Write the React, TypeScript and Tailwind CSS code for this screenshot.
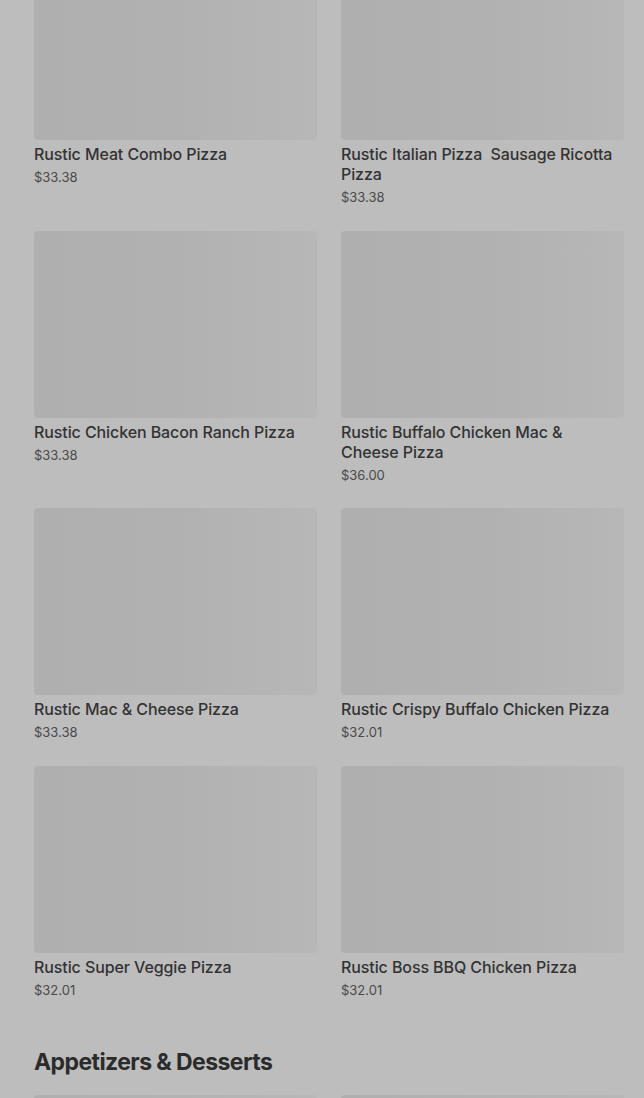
const items = [
  { name: "Rustic Meat Combo Pizza", price: "$33.38" },
  { name: "Rustic Italian Pizza  Sausage Ricotta Pizza", price: "$33.38" },
  { name: "Rustic Chicken Bacon Ranch Pizza", price: "$33.38" },
  { name: "Rustic Buffalo Chicken Mac & Cheese Pizza", price: "$36.00" },
  { name: "Rustic Mac & Cheese Pizza", price: "$33.38" },
  { name: "Rustic Crispy Buffalo Chicken Pizza", price: "$32.01" },
  { name: "Rustic Super Veggie Pizza", price: "$32.01" },
  { name: "Rustic Boss BBQ Chicken Pizza", price: "$32.01" },
];

function ItemCard({ name, price }: { name: string; price: string }) {
  return (
    <div className="flex flex-col">
      <div className="h-[187px] rounded-sm bg-gradient-to-r from-[#afafaf] via-[#b1b1b1] to-[#b7b7b7]" />
      <div className="mt-1 pr-2 text-base leading-5 font-medium tracking-[-0.006em] text-[#333333] whitespace-pre-wrap">{name}</div>
      <div className="mt-1 text-[13px] leading-[18px] text-[#4a4a4a]">{price}</div>
    </div>
  );
}

export default function App() {
  return (
    <div className="h-[1098px] overflow-hidden bg-[#bdbdbd] pl-[34px] pr-[20px] font-['Inter',sans-serif]">
      <div className="-mt-[47px] grid grid-cols-2 gap-x-6 gap-y-[24.5px]">
        {items.map((it) => (
          <ItemCard key={it.name} {...it} />
        ))}
      </div>
      <h2 className="mt-[49px] text-[23px] leading-7 font-bold tracking-tight text-[#2b2b2b]">Appetizers &amp; Desserts</h2>
      <div className="mt-[19px] grid grid-cols-2 gap-x-6">
        <div className="h-[187px] rounded-sm bg-gradient-to-r from-[#afafaf] to-[#b7b7b7]" />
        <div className="h-[187px] rounded-sm bg-gradient-to-r from-[#afafaf] to-[#b7b7b7]" />
      </div>
    </div>
  );
}
